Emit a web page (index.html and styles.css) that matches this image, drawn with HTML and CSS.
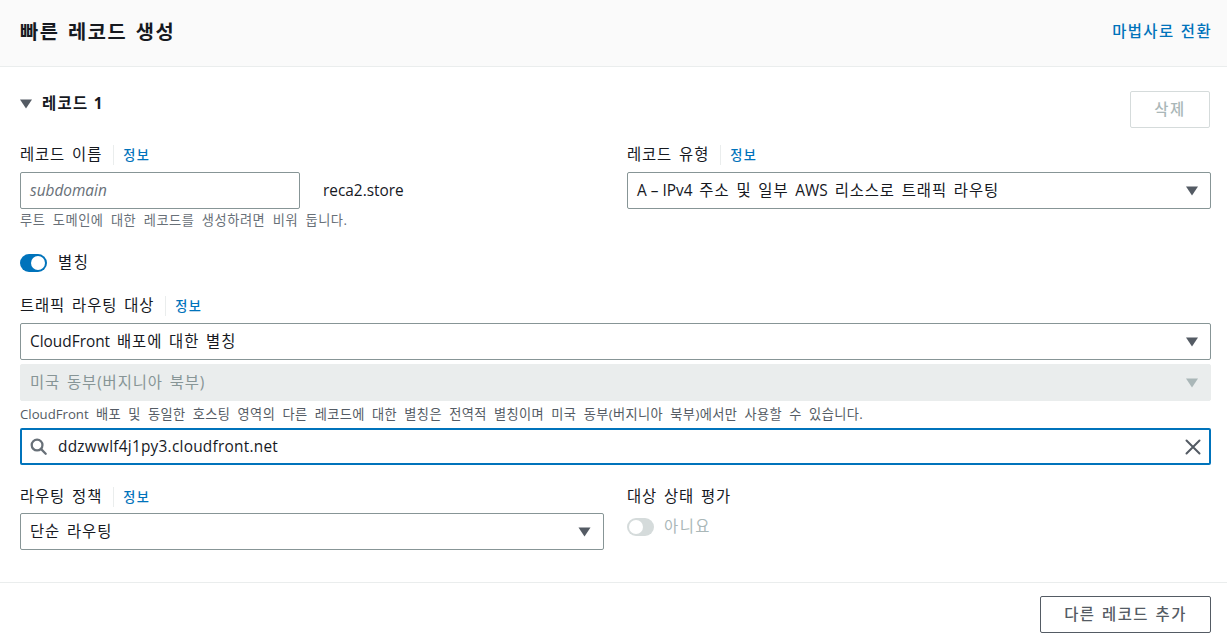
FILE: index.html
```html
<!DOCTYPE html>
<html lang="ko">
<head>
<meta charset="utf-8">
<title>빠른 레코드 생성</title>
<link rel="stylesheet" href="styles.css">
</head>
<body>
<header class="page-head">
  <h1 class="title">빠른 레코드 생성</h1>
  <a class="link strong" href="#">마법사로 전환</a>
</header>
<main class="content">
  <div class="record-head">
    <div class="record-title">
      <svg class="caret" viewBox="0 0 12 10"><path d="M0 .5h12L6 9.5z"/></svg>
      <h2>레코드 1</h2>
    </div>
    <button class="btn btn-disabled" type="button">삭제</button>
  </div>

  <div class="grid first-row">
    <div>
      <div class="label-row"><span class="label">레코드 이름</span><a class="info" href="#">정보</a></div>
      <div class="name-row">
        <div class="box name-box"><span class="placeholder lat">subdomain</span></div>
        <span class="domain lat">reca2.store</span>
      </div>
      <p class="hint">루트 도메인에 대한 레코드를 생성하려면 비워 둡니다.</p>
    </div>
    <div>
      <div class="label-row"><span class="label">레코드 유형</span><a class="info" href="#">정보</a></div>
      <div class="box select"><span><span class="lat">A – IPv4</span> 주소 및 일부 <span class="lat">AWS</span> 리소스로 트래픽 라우팅</span><svg class="arrow" viewBox="0 0 12 10"><path d="M0 .5h12L6 9.5z"/></svg></div>
    </div>
  </div>

  <div class="toggle-row alias">
    <span class="toggle on"><i></i></span>
    <span class="toggle-text">별칭</span>
  </div>

  <div class="label-row target-label"><span class="label">트래픽 라우팅 대상</span><a class="info" href="#">정보</a></div>
  <div class="box select"><span><span class="lat">CloudFront</span> 배포에 대한 별칭</span><svg class="arrow" viewBox="0 0 12 10"><path d="M0 .5h12L6 9.5z"/></svg></div>
  <div class="box select disabled"><span>미국 동부(버지니아 북부)</span><svg class="arrow" viewBox="0 0 12 10"><path d="M0 .5h12L6 9.5z"/></svg></div>
  <p class="hint target-hint"><span class="lat">CloudFront</span> 배포 및 동일한 호스팅 영역의 다른 레코드에 대한 별칭은 전역적 별칭이며 미국 동부(버지니아 북부)에서만 사용할 수 있습니다.</p>
  <div class="box search">
    <svg class="search-icon" viewBox="0 0 18 18"><circle cx="7.5" cy="7.5" r="5.7"/><path d="M11.8 11.8 16.6 16.6"/></svg>
    <span class="search-value lat">ddzwwlf4j1py3.cloudfront.net</span>
    <svg class="clear-icon" viewBox="0 0 16 16"><path d="M1.5 1.5l13 13M14.5 1.5l-13 13"/></svg>
  </div>

  <div class="grid last-row">
    <div>
      <div class="label-row"><span class="label">라우팅 정책</span><a class="info" href="#">정보</a></div>
      <div class="box select"><span>단순 라우팅</span><svg class="arrow" viewBox="0 0 12 10"><path d="M0 .5h12L6 9.5z"/></svg></div>
    </div>
    <div>
      <div class="label-row"><span class="label">대상 상태 평가</span></div>
      <div class="toggle-row health">
        <span class="toggle off"><i></i></span>
        <span class="toggle-text muted">아니요</span>
      </div>
    </div>
  </div>
</main>
<footer class="foot">
  <button class="btn" type="button">다른 레코드 추가</button>
</footer>
</body>
</html>
```

FILE: styles.css
```css
* { box-sizing: border-box; }
html, body { margin: 0; padding: 0; }
body {
  width: 1227px;
  height: 643px;
  overflow: hidden;
  background: #fff;
  color: #16191f;
  font: 15.4px/20px "Open Sans", "Noto Sans CJK KR", sans-serif;
  letter-spacing: 0.9px;
  word-spacing: 2px;
}
.lat { letter-spacing: 0; word-spacing: 0; }
.page-head {
  height: 67px;
  padding: 0 15px 0 20px;
  display: flex;
  align-items: center;
  justify-content: space-between;
  background: #fafafa;
  border-bottom: 1px solid #eaeded;
}
.title { margin: 0 0 2px; font-size: 19.8px; line-height: 26px; font-weight: 700; letter-spacing: 1.5px; word-spacing: 2px; }
.link { color: #0073bb; text-decoration: none; }
.strong { font-weight: 500; margin-bottom: 2px; letter-spacing: 1.4px; word-spacing: 1px; }
.content { padding: 24px 16px 0 20px; height: 516px; border-bottom: 1px solid #eaeded; }
.record-head { display: flex; justify-content: space-between; align-items: flex-start; height: 53px; padding-right: 1px; }
.record-title { display: flex; align-items: center; gap: 10px; height: 26px; }
.record-title h2 { margin: 0; font-size: 15.4px; font-weight: 700; line-height: 24px; letter-spacing: 1.3px; word-spacing: 0; }
.caret { width: 12px; height: 10px; fill: #545b64; }
.btn {
  height: 37px;
  padding: 0 24px;
  border: 1px solid #545b64;
  border-radius: 2px;
  background: #fff;
  color: #545b64;
  font: 500 15.4px/20px "Open Sans", "Noto Sans CJK KR", sans-serif;
  letter-spacing: 1.5px;
  word-spacing: 1px;
}
.btn-disabled { width: 80px; margin-top: 0; padding: 0; border-color: #d5dbdb; color: #aab7b8; }
.grid { display: grid; grid-template-columns: 584px 584px; column-gap: 23px; }
.first-row { height: 109px; }
.label-row { display: flex; align-items: center; height: 22px; margin-bottom: 6px; }
.label { line-height: 20px; }
.info {
  margin-left: 11px;
  padding-left: 9px;
  border-left: 1px solid #eaeded;
  color: #0073bb;
  font-size: 13.2px;
  font-weight: 500;
  line-height: 20px;
  letter-spacing: 1.4px;
  text-decoration: none;
}
.box {
  height: 37px;
  display: flex;
  align-items: center;
  padding: 0 9px;
  background: #fff;
  border: 1px solid #879596;
  border-radius: 2px;
}
.name-row { display: flex; align-items: center; gap: 23px; }
.name-box { width: 280px; }
.placeholder { color: #687078; font-style: italic; }
.hint { margin: 0; color: #687078; font-size: 13.2px; line-height: 16px; padding-top: 3px; letter-spacing: 0.56px; word-spacing: 3.4px; }
.select { justify-content: space-between; }
.arrow { width: 12px; height: 10px; margin-right: 3px; fill: #545b64; }
.disabled { margin-top: 4px; border-color: #eaeded; background: #eaeded; color: #879596; }
.disabled .arrow { fill: #aab7b8; }
.toggle-row { display: flex; align-items: center; }
.toggle { display: flex; align-items: center; width: 27px; height: 18px; padding: 0 2px; border-radius: 9px; flex: none; }
.toggle i { width: 14px; height: 14px; border-radius: 50%; background: #fff; }
.toggle.on { justify-content: flex-end; background: #0073bb; }
.toggle.off { background: #d5dbdb; }
.toggle-text { margin-left: 11px; letter-spacing: 1.5px; }
.muted { margin-left: 10px; color: #aab7b8; }
.alias { height: 20px; }
.target-label { margin-top: 22px; margin-bottom: 6px; }
.target-hint { padding-top: 5px; padding-bottom: 6px; color: #545b64; white-space: nowrap; letter-spacing: 0.4px; }
.search { padding: 0 8px; border: 2px solid #0073bb; }
.search-icon { width: 17px; height: 17px; fill: none; stroke: #687078; stroke-width: 2.4; stroke-linecap: round; flex: none; }
.search-value { flex: 1; margin-left: 11px; letter-spacing: 0.25px; }
.clear-icon { width: 16px; height: 16px; fill: none; stroke: #545b64; stroke-width: 2; stroke-linecap: round; flex: none; }
.last-row { margin-top: 21px; }
.last-row .label-row { margin-bottom: 5px; }
.last-row .arrow { width: 13px; }
.health { margin-top: 8px; height: 22px; }
.foot { display: flex; justify-content: flex-end; padding: 13px 16px 0 0; }
.foot .btn { width: 171px; padding: 0; }
```
